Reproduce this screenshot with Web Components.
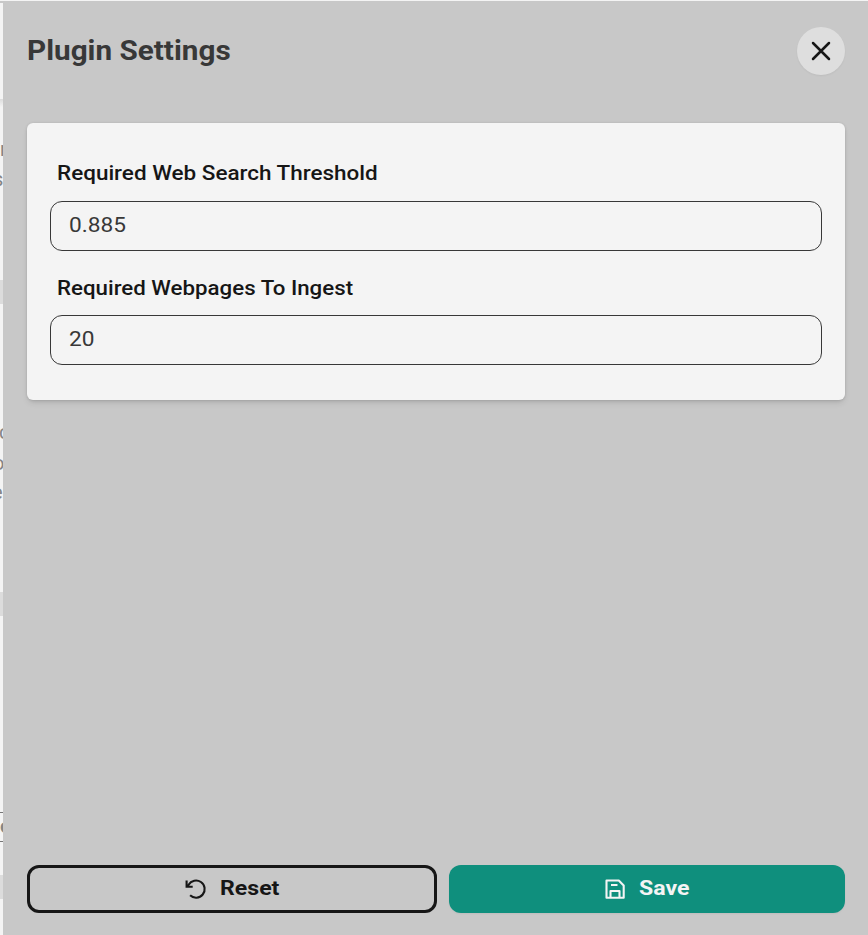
<!DOCTYPE html>
<html lang="en"><head><meta charset="utf-8"><title>Plugin Settings</title>
<style>
html,body{margin:0;height:100%}
body{font-family:Roboto,"Open Sans",sans-serif;background:#f4f4f4;overflow:hidden}
</style></head><body>
<settings-screen></settings-screen>
<script>
const define=(name,html)=>customElements.define(name,class extends HTMLElement{
  constructor(){super();this.attachShadow({mode:'open'}).innerHTML=html;}
});
define('page-edge',`<style>
:host{display:block;position:relative;width:3px;height:934px;overflow:hidden;background:#f4f4f4;color:#858585;font-size:20px;line-height:30px}
:host::before{content:"";position:absolute;inset:0 0 auto;height:2px;background:#c8c8c8}
i{position:absolute;left:0;width:3px;height:24px;background:#dcdcdc}
b{position:absolute;left:0;width:3px;height:1px;background:#777}
span{position:absolute}
</style><i style="top:98px;height:8px;background:linear-gradient(#dcdcdc,#f4f4f4)"></i><i style="top:279px"></i><i style="top:591px"></i><i style="top:874px"></i><b style="top:811px"></b><b style="top:840px"></b>
<span style="left:0;top:133px">r</span><span style="left:-7px;top:163px">s</span><span style="left:-1px;top:416px">c</span><span style="left:-7px;top:447px">o</span><span style="left:-8px;top:476px">e</span><span style="left:0;top:810px;font-weight:700">e</span>`);
define('close-button',`<style>
:host{display:block}
button{display:grid;place-items:center;width:48px;height:48px;padding:0;border:0;border-radius:50%;background:#dedede;box-shadow:0 1px 2px #0000000d}
</style><button aria-label="Close"><svg width="24" height="24" viewBox="0 0 24 24" fill="none" stroke="#161616" stroke-width="2.5" stroke-linecap="round"><path d="M4 4 20 20M20 4 4 20"/></svg></button>`);
define('panel-header',`<style>
:host{display:flex;justify-content:space-between;align-items:center;height:48px}
h1{margin:0;font-size:27px;line-height:36px;font-weight:700;color:#383838;transform:scaleX(1.1);transform-origin:0 0}
</style><h1><slot></slot></h1><close-button></close-button>`);
define('settings-card',`<style>
:host{display:flex;flex-direction:column;gap:20px;box-sizing:border-box;height:277px;padding:34px 23px 0;border-radius:6px;background:#f4f4f4;box-shadow:0 4px 6px -1px #0000001a,0 2px 4px -2px #0000001a,0 0 3px #0000001a}
</style><slot></slot>`);
define('setting-field',`<style>
:host{display:flex;flex-direction:column}
label{align-self:flex-start;margin-left:7px;height:32px;line-height:var(--label-line,32px);font-size:21px;font-weight:500;color:#161616;transform:scaleX(var(--stretch,1.07));transform-origin:0 0}
div{box-sizing:border-box;height:50px;margin-top:12px;padding:0 18px;border:1px solid #383838;border-radius:12px;font-size:21px;line-height:46px;color:#383838}
p{display:inline-block;margin:0;transform:scaleX(1.08);transform-origin:0 0}
</style><label><slot></slot></label><div role="textbox"><p><slot name="value"></slot></p></div>`);
define('action-button',`<style>
:host{display:flex;box-sizing:border-box;height:48px;justify-content:center;align-items:center;gap:12px;border-radius:12px;font-size:21px;font-weight:700}
:host([kind=reset]){width:410px;border:3px solid #161616;color:#161616}
:host([kind=save]){width:396px;background:#0f8f7d;color:#f4f4f4;box-shadow:0 1px 2px #0000000d}
span{padding-bottom:2px;margin-right:6px;transform:scaleX(1.1);transform-origin:0 0}
</style><slot name="icon"></slot><span><slot></slot></span>`);
define('settings-panel',`<style>
:host{display:flex;flex-direction:column;box-sizing:border-box;flex:1;height:934px;padding:26px 23px 22px 24px;background:#c8c8c8}
settings-card{margin-top:48px}
.pages{--label-line:34px;--stretch:1.061}
footer{display:flex;gap:12px;margin-top:auto}
svg{display:block}
</style><panel-header>Plugin Settings</panel-header>
<settings-card><setting-field>Required Web Search Threshold<span slot="value">0.885</span></setting-field>
<setting-field class="pages">Required Webpages To Ingest<span slot="value">20</span></setting-field></settings-card>
<footer><action-button kind="reset"><svg slot="icon" width="24" height="24" viewBox="0 0 24 24" fill="none" stroke="currentColor" stroke-width="2.1"><path d="M2.6 3.6v6.1h6.1M3.1 9.7l1.5-1.9A8.6 8.6 0 1 1 6.1 18.3"/></svg>Reset</action-button>
<action-button kind="save"><svg slot="icon" width="24" height="24" viewBox="0 0 24 24" fill="none" stroke="currentColor" stroke-width="2.1" stroke-linejoin="round"><path d="M3.5 3.5h12.3l4.9 4.9v12.3H3.5zM7.5 20.5V14h9v6.5M8 8h6.5"/></svg>Save</action-button></footer>`);
define('settings-screen',`<style>
:host{display:flex;width:868px;height:935px;box-sizing:border-box;padding-top:1px}
</style><page-edge></page-edge><settings-panel></settings-panel>`);
</script></body></html>
